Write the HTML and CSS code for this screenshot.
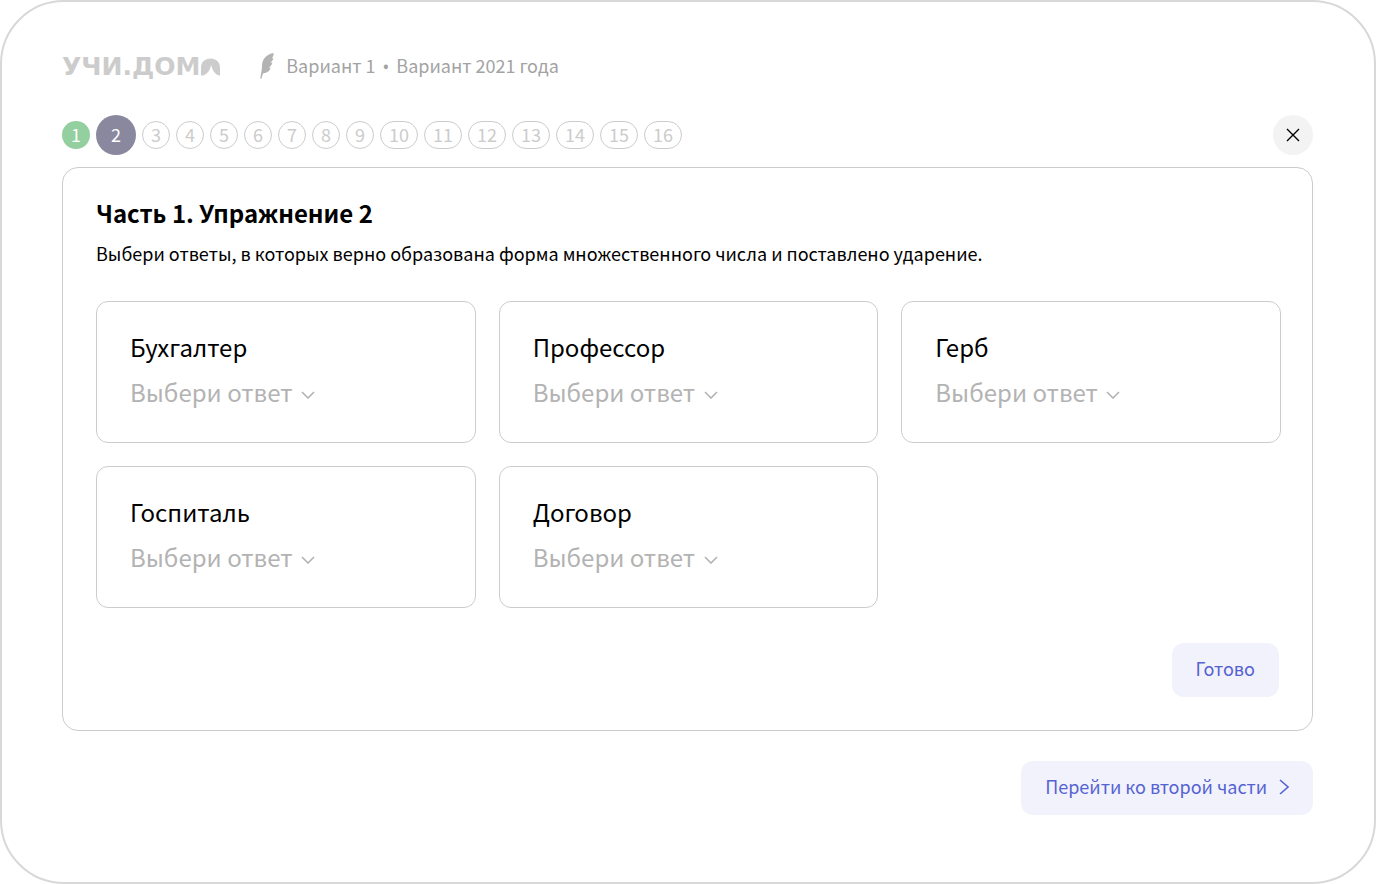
FILE: index.html
```html
<!DOCTYPE html>
<html lang="ru">
<head>
<meta charset="utf-8">
<meta name="viewport" content="width=device-width, initial-scale=1">
<title>Учи.Дома — Вариант 1</title>
<link rel="stylesheet" href="styles.css">
</head>
<body>
<div class="frame">
  <header class="header">
    <a class="logo" href="#" aria-label="Учи.Дома">
      <span class="logo-text">УЧИ.ДОМ</span>
      <svg class="logo-mark" width="20" height="18" viewBox="0 0 20 18" aria-hidden="true"><path fill="currentColor" d="M1 16.500V10C1 4 5 0.500 10.500 0.500S20 4 20 10V17.500C15.500 17 12.500 13 11 6.500 10.500 11.500 8 15.500 3 17.500Q1 18 1 16.500Z"/></svg>
    </a>
    <div class="variant">
      <svg class="feather" width="14" height="26" viewBox="0 0 14 26" aria-hidden="true"><path fill="currentColor" d="M13.500 0C7 1 1.800 6 2 13 2 18 0.500 22 0.300 25.500L1.300 26 3 20.500C7.500 19.500 10 18 10.500 14.500L8.500 14.800C10.500 13.500 12 12 12.300 9.500L10.300 9.800C12 8.500 13 7.500 13.300 5L11.800 5.200C13.300 3.500 13.800 2 13.500 0Z"/></svg>
      <span class="variant-text">Вариант 1 <span class="dot">•</span> Вариант 2021 года</span>
    </div>
  </header>

  <div class="toolbar">
    <nav class="steps" aria-label="Упражнения">
      <button class="step done">1</button>
      <button class="step current" aria-current="step">2</button>
      <button class="step">3</button>
      <button class="step">4</button>
      <button class="step">5</button>
      <button class="step">6</button>
      <button class="step">7</button>
      <button class="step">8</button>
      <button class="step">9</button>
      <button class="step wide">10</button>
      <button class="step wide">11</button>
      <button class="step wide">12</button>
      <button class="step wide">13</button>
      <button class="step wide">14</button>
      <button class="step wide">15</button>
      <button class="step wide">16</button>
    </nav>
    <button class="close" aria-label="Закрыть">
      <svg width="14" height="14" viewBox="0 0 14 14" aria-hidden="true"><path fill="none" stroke="currentColor" stroke-width="1.400" d="M1 1 13 13M13 1 1 13"/></svg>
    </button>
  </div>

  <main class="panel">
    <h1 class="title">Часть 1. Упражнение 2</h1>
    <p class="task">Выбери ответы, в которых верно образована форма множественного числа и поставлено ударение.</p>
    <div class="cards">
      <div class="card">
        <label class="word" for="w1">Бухгалтер</label>
        <div class="picker"><select id="w1"><option>Выбери ответ</option></select><svg class="chevron" width="14" height="8" viewBox="0 0 14 8" aria-hidden="true"><path d="M1 1 7 7 13 1"/></svg></div>
      </div>
      <div class="card">
        <label class="word" for="w2">Профессор</label>
        <div class="picker"><select id="w2"><option>Выбери ответ</option></select><svg class="chevron" width="14" height="8" viewBox="0 0 14 8" aria-hidden="true"><path d="M1 1 7 7 13 1"/></svg></div>
      </div>
      <div class="card">
        <label class="word" for="w3">Герб</label>
        <div class="picker"><select id="w3"><option>Выбери ответ</option></select><svg class="chevron" width="14" height="8" viewBox="0 0 14 8" aria-hidden="true"><path d="M1 1 7 7 13 1"/></svg></div>
      </div>
      <div class="card">
        <label class="word" for="w4">Госпиталь</label>
        <div class="picker"><select id="w4"><option>Выбери ответ</option></select><svg class="chevron" width="14" height="8" viewBox="0 0 14 8" aria-hidden="true"><path d="M1 1 7 7 13 1"/></svg></div>
      </div>
      <div class="card">
        <label class="word" for="w5">Договор</label>
        <div class="picker"><select id="w5"><option>Выбери ответ</option></select><svg class="chevron" width="14" height="8" viewBox="0 0 14 8" aria-hidden="true"><path d="M1 1 7 7 13 1"/></svg></div>
      </div>
    </div>
    <div class="actions"><button class="button">Готово</button></div>
  </main>

  <footer class="footer">
    <button class="button">Перейти ко второй части
      <svg class="arrow" width="10" height="16" viewBox="0 0 10 16" aria-hidden="true"><path fill="none" stroke="currentColor" stroke-width="1.600" d="M1 1 9 8 1 15"/></svg>
    </button>
  </footer>
</div>
</body>
</html>
```
FILE: styles.css
```css
* { box-sizing: border-box; }

body {
  margin: 0;
  background: #fff;
  color: #000;
  font: 18px/28px "Noto Sans CJK SC", "Noto Sans", sans-serif;
}

button, select { font: inherit; color: inherit; }
button { padding: 0; border: 0; cursor: pointer; }
svg { flex: none; }

.frame {
  min-height: 100vh;
  padding: 50px 61px 66px 60px;
  border: 2px solid #d8d8d8;
  border-radius: 64px;
}

.header { display: flex; align-items: center; gap: 40px; height: 28px; }

.logo { display: flex; align-items: center; padding-top: 2px; color: #ccc; text-decoration: none; }
.logo-text { font: bold 25px/28px "DejaVu Sans", sans-serif; }

.variant { display: flex; align-items: center; gap: 12px; color: #a3a3a3; }
.variant-text { padding-bottom: 2px; }
.feather { color: #b3b3b3; }
.dot { margin: 0 3px; font-family: "Noto Sans", sans-serif; }

.toolbar { display: flex; align-items: center; justify-content: space-between; margin-top: 35px; }
.steps { display: flex; align-items: center; gap: 6px; }
.step {
  width: 28px;
  height: 28px;
  padding-bottom: 2px;
  border: 1px solid #ccc;
  border-radius: 20px;
  background: #fff;
  color: #ccc;
  line-height: 24px;
}
.step.wide { width: 38px; }
.step.done { border: 0; background: #93cf9f; color: #fff; }
.step.current { width: 40px; height: 40px; border: 0; background: #89889f; color: #fff; }

.close {
  display: flex;
  align-items: center;
  justify-content: center;
  width: 40px;
  height: 40px;
  border-radius: 50%;
  background: #f3f3f3;
}

.panel {
  margin-top: 12px;
  padding: 29px 31px 33px 33px;
  border: 1px solid #ccc;
  border-radius: 16px;
}
.title { margin: 0; font-size: 24px; line-height: 32px; font-weight: 700; }
.task { margin: 10px 0 0; }

.cards { display: grid; grid-template-columns: repeat(3, 1fr); gap: 23px; margin-top: 34px; }
.card { height: 142px; padding: 27px 33px; border: 1px solid #ccc; border-radius: 12px; }
.word { display: block; font-size: 24px; line-height: 36px; }
.picker { display: flex; align-items: center; margin-top: 9px; color: #b3b3b3; font-size: 24px; line-height: 36px; }
.picker select {
  height: 36px;
  padding: 0 22px 0 0;
  border: 0;
  background: none;
  appearance: none;
}
.chevron { margin-left: -14px; margin-top: 6px; fill: none; stroke: currentColor; stroke-width: 1.6; pointer-events: none; }

.actions { display: flex; justify-content: flex-end; margin: 35px 2px 0 0; }
.button {
  display: flex;
  align-items: center;
  gap: 12px;
  height: 54px;
  padding: 0 24px 4px;
  border-radius: 12px;
  background: #f2f2fc;
  color: #5563d2;
}
.arrow { margin-top: 2px; }

.footer { display: flex; justify-content: flex-end; margin-top: 30px; }
```
